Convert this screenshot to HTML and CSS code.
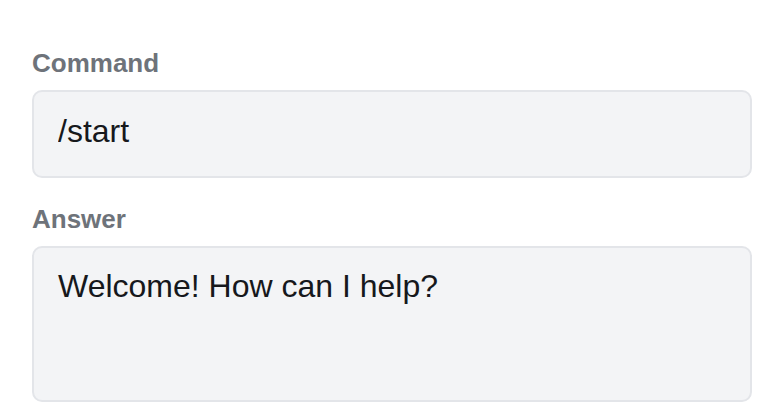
FILE: index.html
```html
<!DOCTYPE html>
<html lang="en">
<head>
  <meta charset="UTF-8" />
  <meta name="viewport" content="width=device-width, initial-scale=1.0"/>
  <title>Command editor</title>
  <link rel="stylesheet" href="styles.css">
</head>
<body>
  <form class="editor">
    <div class="field">
      <label class="field-label" for="command">Command</label>
      <input class="field-input" id="command" type="text" value="/start">
    </div>
    <div class="field">
      <label class="field-label" for="answer">Answer</label>
      <textarea class="field-input field-area" id="answer">Welcome! How can I help?</textarea>
    </div>
  </form>
</body>
</html>
```

FILE: styles.css
```css
:root {
  --label-color: #6e737a;
  --text-color: #16181c;
  --input-bg: #f3f4f6;
  --border-color: #e3e5e9;
}
body {
  margin: 0;
  background: #ffffff;
  font-family: 'Liberation Sans', Arial, sans-serif;
  color: var(--text-color);
}
.editor {
  padding: 48px 28px 0 32px;
}
.field {
  display: flex;
  flex-direction: column;
  gap: 12px;
  margin-bottom: 26px;
}
.field-label {
  font-size: 26px;
  font-weight: bold;
  color: var(--label-color);
  line-height: 30px;
}
.field-input {
  box-sizing: border-box;
  width: 100%;
  height: 88px;
  margin: 0;
  padding: 21px 24px 27px;
  background: var(--input-bg);
  border: 2px solid var(--border-color);
  border-radius: 10px;
  font-family: inherit;
  font-size: 32px;
  line-height: 36px;
  color: var(--text-color);
  outline: none;
}
.field-area {
  display: block;
  height: 156px;
  padding-top: 20px;
  resize: none;
}
```
